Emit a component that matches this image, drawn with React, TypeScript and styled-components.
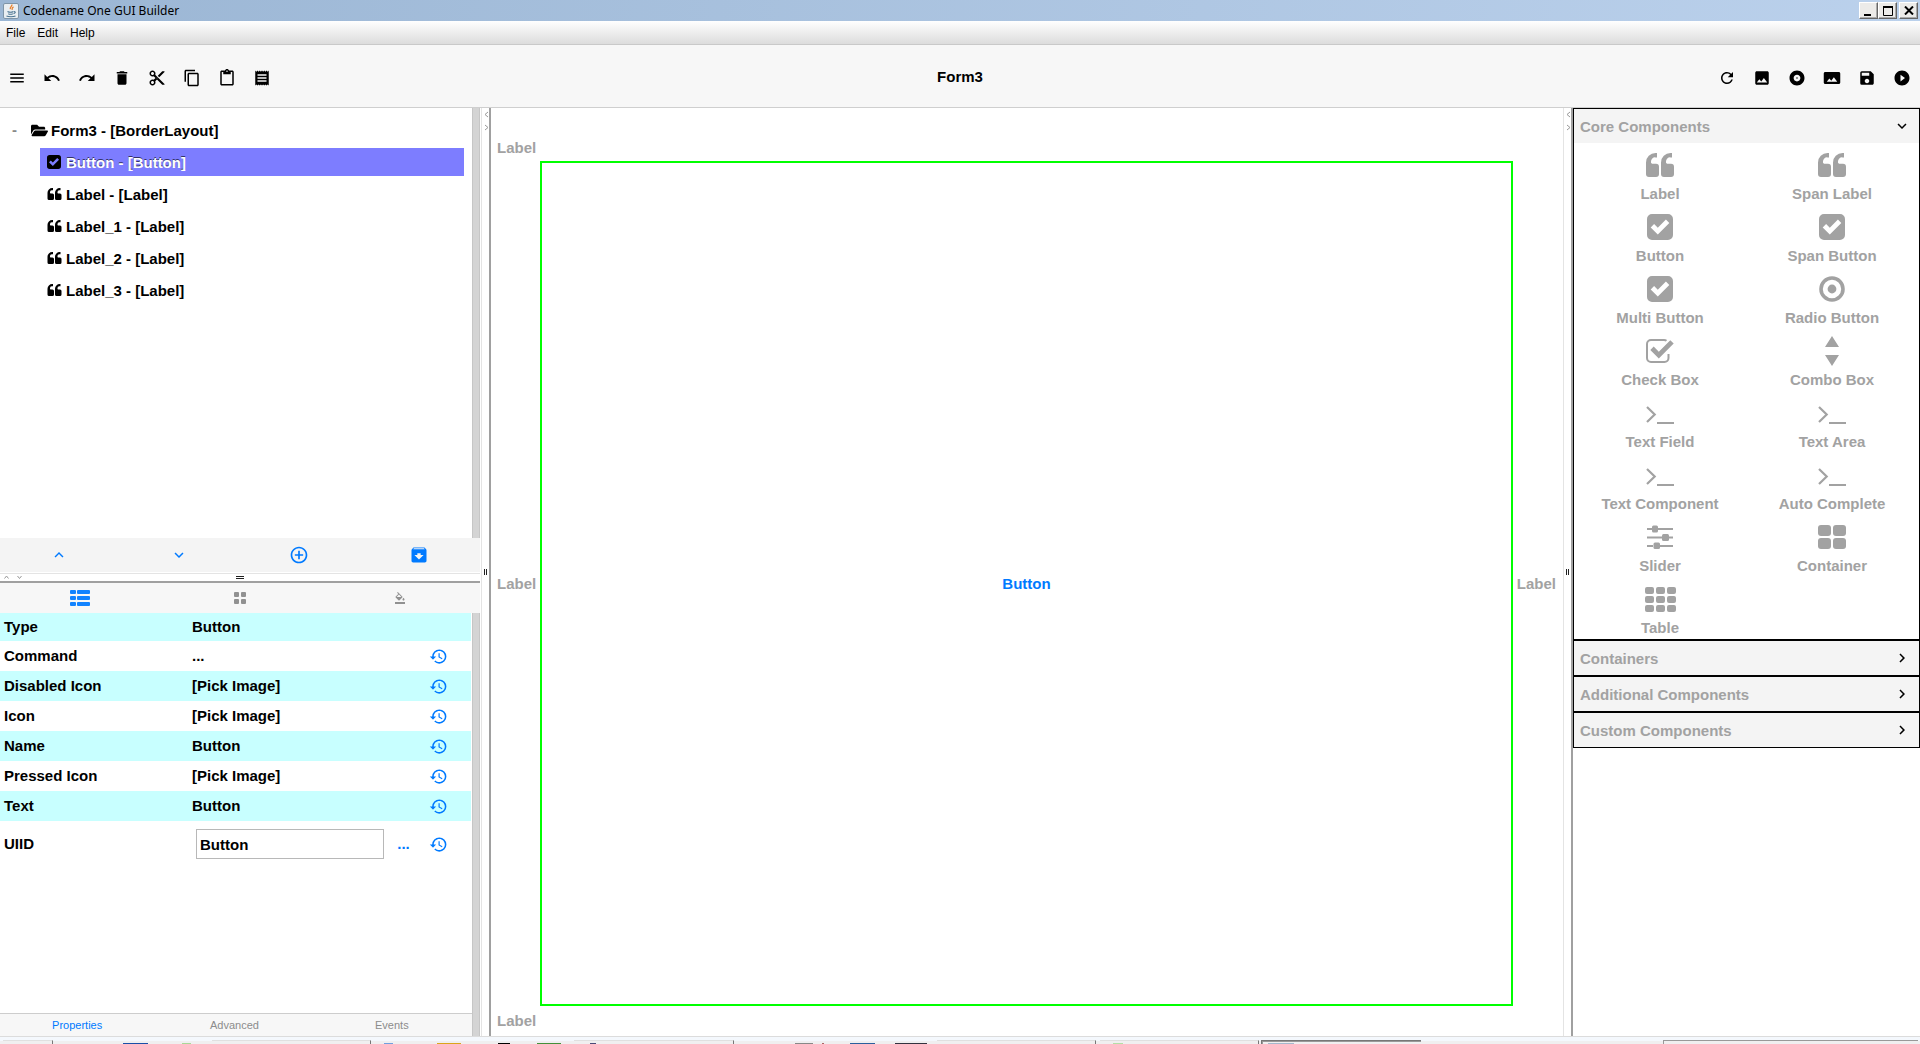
import React, { useState } from 'react';
import styled, { createGlobalStyle, css } from 'styled-components';
import {
  MdMenu, MdUndo, MdRedo, MdDelete, MdContentCut, MdContentCopy, MdContentPaste, MdReceipt,
  MdRefresh, MdImage, MdAlbum, MdPanorama, MdSave, MdPlayCircleFilled, MdExpandLess,
  MdExpandMore, MdChevronRight, MdAddCircleOutline, MdArchive, MdFormatColorFill, MdHistory,
} from 'react-icons/md';
import { FaFolderOpen } from 'react-icons/fa';

const GlobalStyle = createGlobalStyle`
  * { box-sizing: border-box; }
  body { margin: 0; font: bold 15px/20px "Liberation Sans", Arial, sans-serif; color: #000; background: #fff; }
  button, input { font: inherit; color: inherit; }
  button { background: none; border: 0; padding: 0; }
  svg { display: block; flex: none; }
`;

const BLUE = '#007aff';
const GREY = '#a2a2a2';

/* ---------- icons ---------- */

const Glyph = ({ w, h, vb, children }: { w: number; h: number; vb: string; children: React.ReactNode }) => (
  <svg width={w} height={h} viewBox={vb} fill="currentColor" aria-hidden="true">{children}</svg>
);

const Quote = ({ w = 28, h = 24 }: { w?: number; h?: number }) => (
  <Glyph w={w} h={h} vb="0 0 28 24">
    <path d="M9.500 0H11v4.400H9.500A4 4 0 0 0 5 8.500v1.300l1 1H10a3 3 0 0 1 3 3V21a3 3 0 0 1-3 3H3a3 3 0 0 1-3-3V9.500A9.500 9.500 0 0 1 9.500 0Z" />
    <path d="M24.500 0H26v4.400H24.500A4 4 0 0 0 20 8.500v1.300l1 1H25a3 3 0 0 1 3 3V21a3 3 0 0 1-3 3H18a3 3 0 0 1-3-3V9.500A9.500 9.500 0 0 1 24.500 0Z" />
  </Glyph>
);

const CheckSquare = ({ size = 26 }: { size?: number }) => (
  <Glyph w={size} h={size} vb="0 0 26 26">
    <path fillRule="evenodd" d="M5 0H21a5 5 0 0 1 5 5V21a5 5 0 0 1-5 5H5a5 5 0 0 1-5-5V5a5 5 0 0 1 5-5ZM10.800 20.500 22.300 9 18.900 5.600 10.800 13.700 7.100 10 3.700 13.400Z" />
  </Glyph>
);

const Radio = () => (
  <Glyph w={26} h={26} vb="0 0 26 26">
    <circle cx="13" cy="13" r="11" fill="none" stroke="currentColor" strokeWidth="3.6" />
    <circle cx="13" cy="13" r="4.400" />
  </Glyph>
);

const CheckBox = () => (
  <Glyph w={28} h={24} vb="0 0 28 24">
    <path d="M20.500 1.800Q19.500 1 18 1H5A4 4 0 0 0 1 5V19a4 4 0 0 0 4 4H18.500a4 4 0 0 0 4-4V15" fill="none" stroke="currentColor" strokeWidth="2" />
    <path d="M12.800 19.500 4.300 11 7.700 7.600 12.800 12.700 24.300 1.200 27.700 4.600Z" />
  </Glyph>
);

const Combo = () => (
  <Glyph w={14} h={30} vb="0 0 14 30"><path d="M7 0 14 11H0ZM7 30 0 19H14Z" /></Glyph>
);

const Prompt = () => (
  <Glyph w={28} h={24} vb="0 -4 28 24">
    <path d="M1 2 8.700 9.500 1 17" fill="none" stroke="currentColor" strokeWidth="2.200" />
    <path d="M11 17H28v2H11Z" />
  </Glyph>
);

const Sliders = () => (
  <Glyph w={26} h={24} vb="0 0 26 24">
    <path d="M0 3H5V5H0ZM11 3H26V5H11ZM0 11.500H15V13.500H0ZM22 11.500H26V13.500H22ZM0 20H6V22H0ZM13 20H26V22H13Z" />
    <rect x="5" y="0.500" width="6" height="7" rx="1.500" />
    <rect x="15" y="9" width="7" height="7" rx="1.500" />
    <rect x="6.500" y="17.500" width="6.500" height="6.500" rx="1.500" />
  </Glyph>
);

const GridGlyph = ({ cols, rows, cw, ch, gx, gy, r }: { cols: number; rows: number; cw: number; ch: number; gx: number; gy: number; r: number }) => {
  const w = cols * cw + (cols - 1) * gx;
  const h = rows * ch + (rows - 1) * gy;
  return (
    <Glyph w={w} h={h} vb={`0 0 ${w} ${h}`}>
      {Array.from({ length: cols * rows }, (_, i) => (
        <rect key={i} x={(i % cols) * (cw + gx)} y={Math.floor(i / cols) * (ch + gy)} width={cw} height={ch} rx={r} />
      ))}
    </Glyph>
  );
};

const ListGlyph = () => (
  <Glyph w={20} h={16} vb="0 0 20 16">
    {[0, 6, 12].map((y) => (
      <React.Fragment key={y}>
        <rect x="0" y={y} width="6" height="4" rx="1" />
        <rect x="7" y={y} width="13" height="4" rx="1" />
      </React.Fragment>
    ))}
  </Glyph>
);

const JavaLogo = () => (
  <svg width="16" height="16" viewBox="0 0 16 16" aria-hidden="true">
    <rect x=".5" y=".5" width="15" height="15" rx="1.500" fill="#e9eef2" stroke="#7f95a8" />
    <path d="M8.800 1.500c1 1.700-2.800 2.700-1.300 4.700M10.500 3.800c-2 1-1.200 1.800-1.400 3" fill="none" stroke="#e8802c" strokeWidth="1.300" />
    <path d="M4.500 8.500c1.500.8 4.500.8 6 0M11 8.700c2-.3 1.500 1.700-.5 2M5.300 10.700c1 .6 3.300.6 4.500 0M3.500 13c2 1 7 1 9 0" fill="none" stroke="#4c7592" strokeWidth="1.100" />
  </svg>
);

/* ---------- window chrome ---------- */

const Window = styled.div`
  display: flex; flex-direction: column; height: 100vh; overflow: hidden;
`;
const TitleBar = styled.header`
  display: flex; align-items: center; gap: 4px; height: 21px; flex: none; padding: 0 2px 0 3px;
  background: linear-gradient(90deg, #9bb6d4, #bbd1ec);
  font: 12px/20px "Noto Sans", "Open Sans", sans-serif;
`;
const WindowTitle = styled.span`flex: 1;`;
const WindowButtons = styled.div`display: flex; `;
const WindowButton = styled.button<{ $apart?: boolean }>`
  display: grid; place-items: center; width: 19px; height: 17px; margin-left: ${(p) => (p.$apart ? 2 : 0)}px;
  background: #ecebe9; border: 1px solid; border-color: #fff #666 #666 #fff;
  box-shadow: inset -1px -1px #aaa;
`;
const MenuBar = styled.nav`
  display: flex; align-items: center; gap: 12px; height: 24px; flex: none; padding: 1px 6px 0;
  font-size: 12px; font-weight: normal; color: #000;
  background: linear-gradient(#fff, #dcdcdc); border-bottom: 1px solid #c9c9c9;
`;
const ToolBar = styled.div`
  display: grid; grid-template-columns: 1fr auto 1fr; align-items: center; height: 63px; flex: none;
  padding-top: 4px; background: #f7f7f7; border-bottom: 1px solid #cfcfcf;
`;
const ToolGroup = styled.div<{ $end?: boolean }>`
  display: flex; justify-content: ${(p) => (p.$end ? 'flex-end' : 'flex-start')};
`;
const ToolButton = styled.button`
  display: grid; place-items: center; width: 35px; height: 36px; padding-right: 1px;
`;
const FormTitle = styled.h1`margin: 0; font-size: 15px; padding-bottom: 2px;`;

/* ---------- panes ---------- */

const Main = styled.main`display: flex; flex: 1; min-height: 0;`;
const LeftPane = styled.aside`display: flex; flex-direction: column; flex: 0 0 25%; min-width: 0;`;
const UpperPane = styled.section`display: flex; flex-direction: column; flex: 0 0 50%;`;
const LowerPane = styled.section`display: flex; flex-direction: column; flex: 1; min-height: 0;`;
const Scrolled = styled.div`display: flex; flex: 1; min-height: 0;`;
const ScrollBody = styled.div`display: flex; flex-direction: column; flex: 1; min-width: 0;`;
const ScrollTrack = styled.div`
  width: 8px; flex: none; background: #d4d4d4; border: solid #c6c6c6; border-width: 0 1px;
`;
const Splitter = styled.div<{ $row?: boolean }>`
  position: relative; flex: none; display: flex; align-items: center; justify-content: center;
  ${(p) => p.$row
    ? css`height: 11px; border-top: 1px solid #fff; border-bottom: 2px solid #a0a0a0; box-shadow: inset 0 1px #e4e4e4;`
    : css`width: 11px; border-left: 1px solid #fff; border-right: 2px solid #a0a0a0; box-shadow: inset 1px 0 #e4e4e4;`}
`;
const Grip = styled.span<{ $row?: boolean }>`
  ${(p) => p.$row
    ? css`width: 8px; height: 3px; border: solid #222; border-width: 1px 0;`
    : css`width: 3px; height: 6px; border: solid #222; border-width: 0 1px;`}
`;
const Arrows = styled.svg<{ $row?: boolean }>`
  position: absolute; ${(p) => (p.$row ? 'left: 4px; top: 1px;' : 'left: 3px; top: 3px;')}
  fill: none; stroke: #999;
`;

const SplitBar = ({ row }: { row?: boolean }) => (
  <Splitter $row={row} role="separator">
    {row ? (
      <Arrows $row width="19" height="6" viewBox="0 0 19 6"><path d="M.5 4.500 2.500 2 4.500 4.500M13.500 2 15.500 4.500 17.500 2" /></Arrows>
    ) : (
      <Arrows width="5" height="20" viewBox="0 0 5 20"><path d="M4 1 1 3.500 4 6M1 14 4 16.500 1 19" /></Arrows>
    )}
    <Grip $row={row} />
  </Splitter>
);

/* ---------- component tree ---------- */

const Tree = styled.div`
  display: flex; flex-direction: column; gap: 4px; flex: 1; padding: 8px 8px 0 0;
`;
const TreeRoot = styled.button`
  display: flex; align-items: center; gap: 3px; height: 28px; padding: 0 0 0 12px;
`;
const Toggle = styled.span`width: 16px; text-align: left; color: #888;`;
const TreeNode = styled.button<{ $selected: boolean }>`
  display: flex; align-items: center; gap: 4px; height: 28px; margin-left: 40px; padding: 0 7px;
  ${(p) => p.$selected && css`background: #7d7dff;`}
`;
const NodeIcon = styled.span`display: grid; justify-items: start; width: 15px;`;
const NodeText = styled.span<{ $selected: boolean }>`
  padding-top: 1px;
  ${(p) => p.$selected && css`color: #fff; text-shadow: 0 -1px #333366;`}
`;
const ActionBar = styled.div`
  display: grid; grid-template-columns: repeat(4, 1fr); height: 34px; flex: none; background: #f4f4f4; color: ${BLUE};
`;
const ActionButton = styled.button`display: grid; place-items: center; padding-right: 2px;`;

/* ---------- properties ---------- */

const ViewTabs = styled.div`
  display: grid; grid-template-columns: repeat(3, 1fr); height: 30px; flex: none; background: #f7f7f7;
`;
const ViewTab = styled.button<{ $active?: boolean }>`
  display: grid; place-items: center; color: ${(p) => (p.$active ? '#1283ff' : '#919191')};
`;
const PropTable = styled.table`
  width: 100%; border-collapse: collapse; table-layout: fixed; border-right: 1px solid #fff;
`;
const PropRow = styled.tr<{ $tint: boolean; $height: number }>`
  height: ${(p) => p.$height}px; background: ${(p) => (p.$tint ? '#c8ffff' : '#fff')};
`;
const PropName = styled.th`width: 192px; padding: 0 4px; text-align: left;`;
const PropValue = styled.td`padding: 0;`;
const UiidField = styled.td`padding: 0 0 0 4px;`;
const UiidLine = styled.div`display: flex; align-items: center;`;
const UiidInput = styled.input`
  flex: 1; min-width: 0; height: 30px; padding: 0 3px; border: 1px solid #b8b8b8; background: #fff; outline: 0;
`;
const MoreButton = styled.button`width: 40px; color: ${BLUE};`;
const PropReset = styled.td`width: 48px; padding: 0; color: ${BLUE};`;
const ResetButton = styled.button`display: block; margin-left: 5px;`;
const PageTabs = styled.div`
  display: grid; grid-template-columns: repeat(3, 1fr); height: 23px; flex: none; margin-top: auto;
  background: #f7f7f7; border-top: 1px solid #cdcdcd;
`;
const PageTab = styled.button<{ $active: boolean }>`
  padding-right: 3px; font-size: 11px; font-weight: normal; color: ${(p) => (p.$active ? BLUE : '#8c8c8c')};
`;

/* ---------- canvas ---------- */

const Canvas = styled.section`
  display: grid; flex: 1; min-width: 0; color: ${GREY};
  grid-template: 53px 1fr 30px / 49px 1fr 49px;
`;
const NorthLabel = styled.div`grid-column: 1 / -1; padding: 30px 6px 0;`;
const SideLabel = styled.div<{ $end?: boolean }>`
  display: flex; align-items: center; justify-content: ${(p) => (p.$end ? 'flex-end' : 'flex-start')}; padding: 0 6px;
`;
const CenterButton = styled.button`border: 2px solid #0f0; color: ${BLUE};`;
const SouthLabel = styled.div`grid-column: 1 / -1; padding: 5px 6px;`;

/* ---------- palette ---------- */

const Palette = styled.aside`flex: 0 0 347px; color: ${GREY};`;
const Section = styled.section`border: 1px solid #000;`;
const SectionHead = styled.button`
  display: flex; align-items: center; justify-content: space-between; width: 100%; height: 34px;
  padding: 2px 8px 0 6px; background: #f4f4f4;
`;
const Chevron = styled.span`color: #000; padding-bottom: 3px;`;
const Items = styled.div`display: grid; grid-template-columns: 1fr 1fr; padding-right: 1px;`;
const Item = styled.button`
  display: flex; flex-direction: column; align-items: center; gap: 3px; height: 62px; padding-top: 6px;
`;
const ItemIcon = styled.span`display: grid; place-items: center; height: 32px;`;

/* ---------- task bar ---------- */

const TaskBar = styled.footer`
  display: flex; align-items: flex-end; height: 8px; flex: none; overflow: hidden; padding-left: 3px;
  background: linear-gradient(#f4f8fd 4px, #f0eff0 4px); border-top: 1px solid #dcdcdc;
`;
const Task = styled.div<{ $w: number; $down?: boolean }>`
  display: flex; align-items: flex-end; width: ${(p) => p.$w}px; height: 4px; flex: none; border: solid #777; background: #f0eff0;
  ${(p) => p.$down ? css`border-width: 1px 0 0 1px; box-shadow: inset 1px 1px #999;` : css`border-color: #e0e0e0 #777; border-width: 1px 1px 0 0;`}
`;
const Launchers = styled.div<{ $w: number }>`
  display: flex; align-items: flex-end; width: ${(p) => p.$w}px; flex: none;
`;
const Launcher = styled.span<{ $gap: number; $w: number; $c: string }>`
  flex: none; margin-left: ${(p) => p.$gap}px; width: ${(p) => p.$w}px; height: 1px; background: ${(p) => p.$c};
`;
const Tray = styled.div`
  width: 255px; height: 4px; margin: 0 2px 0 auto; border: solid #999; border-width: 1px 0 0 1px; background: #f0eff0;
`;

const leftTools = [
  ['Menu', MdMenu], ['Undo', MdUndo], ['Redo', MdRedo], ['Delete', MdDelete], ['Cut', MdContentCut],
  ['Copy', MdContentCopy], ['Paste', MdContentPaste], ['Receipt', MdReceipt],
] as const;
const rightTools = [
  ['Refresh', MdRefresh], ['Image', MdImage], ['Theme', MdAlbum], ['Background', MdPanorama],
  ['Save', MdSave], ['Preview', MdPlayCircleFilled],
] as const;
const nodes = ['Button - [Button]', 'Label - [Label]', 'Label_1 - [Label]', 'Label_2 - [Label]', 'Label_3 - [Label]'];
const properties = [
  ['Type', 'Button'], ['Command', '...'], ['Disabled Icon', '[Pick Image]'], ['Icon', '[Pick Image]'],
  ['Name', 'Button'], ['Pressed Icon', '[Pick Image]'], ['Text', 'Button'],
];
const components: [string, React.ReactNode][] = [
  ['Label', <Quote />], ['Span Label', <Quote />],
  ['Button', <CheckSquare />], ['Span Button', <CheckSquare />],
  ['Multi Button', <CheckSquare />], ['Radio Button', <Radio />],
  ['Check Box', <CheckBox />], ['Combo Box', <Combo />],
  ['Text Field', <Prompt />], ['Text Area', <Prompt />],
  ['Text Component', <Prompt />], ['Auto Complete', <Prompt />],
  ['Slider', <Sliders />], ['Container', <GridGlyph cols={2} rows={2} cw={13} ch={11} gx={2} gy={2} r={3} />],
  ['Table', <GridGlyph cols={3} rows={3} cw={9} ch={7} gx={2} gy={2} r={2} />],
];
const pages = ['Properties', 'Advanced', 'Events'];

export default function App() {
  const [selected, setSelected] = useState(0);
  const [page, setPage] = useState('Properties');
  const [uiid, setUiid] = useState('Button');
  const [open, setOpen] = useState(true);

  return (
    <Window>
      <GlobalStyle />
      <TitleBar>
        <JavaLogo />
        <WindowTitle>Codename One GUI Builder</WindowTitle>
        <WindowButtons>
          <WindowButton aria-label="Minimize"><svg width="11" height="11"><path d="M1 9H8V11H1Z" /></svg></WindowButton>
          <WindowButton aria-label="Maximize"><svg width="10" height="10"><path d="M.5 1H9.500V9.500H.5Z" fill="none" stroke="#000" /><path d="M0 0H10V2H0Z" /></svg></WindowButton>
          <WindowButton $apart aria-label="Close"><svg width="10" height="9"><path d="M1 .5 9 8.500M9 .5 1 8.500" stroke="#000" strokeWidth="2" /></svg></WindowButton>
        </WindowButtons>
      </TitleBar>
      <MenuBar>
        <button>File</button>
        <button>Edit</button>
        <button>Help</button>
      </MenuBar>
      <ToolBar>
        <ToolGroup>
          {leftTools.map(([name, Icon]) => <ToolButton key={name} aria-label={name}><Icon size={18} /></ToolButton>)}
        </ToolGroup>
        <FormTitle>Form3</FormTitle>
        <ToolGroup $end>
          {rightTools.map(([name, Icon]) => <ToolButton key={name} aria-label={name}><Icon size={18} /></ToolButton>)}
        </ToolGroup>
      </ToolBar>
      <Main>
        <LeftPane>
          <UpperPane>
            <Scrolled>
              <Tree>
                <TreeRoot><Toggle>-</Toggle><FaFolderOpen size={17} /><NodeText $selected={false}>Form3 - [BorderLayout]</NodeText></TreeRoot>
                {nodes.map((label, i) => (
                  <TreeNode key={label} $selected={i === selected} onClick={() => setSelected(i)}>
                    <NodeIcon>{i === 0 ? <CheckSquare size={14} /> : <Quote w={15} h={12} />}</NodeIcon>
                    <NodeText $selected={i === selected}>{label}</NodeText>
                  </TreeNode>
                ))}
              </Tree>
              <ScrollTrack />
            </Scrolled>
            <ActionBar>
              <ActionButton aria-label="Move up"><MdExpandLess size={18} /></ActionButton>
              <ActionButton aria-label="Move down"><MdExpandMore size={18} /></ActionButton>
              <ActionButton aria-label="Add"><MdAddCircleOutline size={20} /></ActionButton>
              <ActionButton aria-label="Archive"><MdArchive size={20} /></ActionButton>
            </ActionBar>
          </UpperPane>
          <SplitBar row />
          <LowerPane>
            <ViewTabs>
              <ViewTab $active aria-label="List"><ListGlyph /></ViewTab>
              <ViewTab aria-label="Grid"><GridGlyph cols={2} rows={2} cw={5} ch={5} gx={2} gy={2} r={1} /></ViewTab>
              <ViewTab aria-label="Style"><MdFormatColorFill size={12} /></ViewTab>
            </ViewTabs>
            <Scrolled>
              <ScrollBody>
                <PropTable>
                  <colgroup><col width="192" /><col /><col width="48" /></colgroup>
                  <tbody>
                    {properties.map(([name, value], i) => (
                      <PropRow key={name} $tint={i % 2 === 0} $height={i === 0 ? 28 : 30}>
                        <PropName scope="row">{name}</PropName>
                        <PropValue><button>{value}</button></PropValue>
                        <PropReset>{i > 0 && <ResetButton aria-label={`Reset ${name}`}><MdHistory size={19} /></ResetButton>}</PropReset>
                      </PropRow>
                    ))}
                    <PropRow $tint={false} $height={46}>
                      <PropName scope="row"><label htmlFor="uiid">UIID</label></PropName>
                      <UiidField>
                        <UiidLine>
                          <UiidInput id="uiid" value={uiid} onChange={(e) => setUiid(e.target.value)} />
                          <MoreButton>...</MoreButton>
                        </UiidLine>
                      </UiidField>
                      <PropReset><ResetButton aria-label="Reset UIID"><MdHistory size={19} /></ResetButton></PropReset>
                    </PropRow>
                  </tbody>
                </PropTable>
                <PageTabs>
                  {pages.map((p) => <PageTab key={p} $active={p === page} onClick={() => setPage(p)}>{p}</PageTab>)}
                </PageTabs>
              </ScrollBody>
              <ScrollTrack />
            </Scrolled>
          </LowerPane>
        </LeftPane>
        <SplitBar />
        <Canvas>
          <NorthLabel>Label</NorthLabel>
          <SideLabel>Label</SideLabel>
          <CenterButton>Button</CenterButton>
          <SideLabel $end>Label</SideLabel>
          <SouthLabel>Label</SouthLabel>
        </Canvas>
        <SplitBar />
        <Palette>
          <Section>
            <SectionHead onClick={() => setOpen(!open)}>Core Components<Chevron>{open ? <MdExpandMore size={18} /> : <MdChevronRight size={18} />}</Chevron></SectionHead>
            {open && (
              <Items>
                {components.map(([name, icon]) => <Item key={name}><ItemIcon>{icon}</ItemIcon>{name}</Item>)}
              </Items>
            )}
          </Section>
          {['Containers', 'Additional Components', 'Custom Components'].map((name) => (
            <Section key={name}>
              <SectionHead>{name}<Chevron><MdChevronRight size={18} /></Chevron></SectionHead>
            </Section>
          ))}
        </Palette>
      </Main>
      <TaskBar>
        <Task $w={50} />
        <Launchers $w={159}><Launcher $gap={70} $w={25} $c="#1a4fa8" /><Launcher $gap={34} $w={9} $c="#a8d898" /></Launchers>
        <Task $w={159} />
        <Launchers $w={203}>
          <Launcher $gap={13} $w={9} $c="#6f9fe0" /><Launcher $gap={44} $w={24} $c="#dba51c" />
          <Launcher $gap={37} $w={12} $c="#000" /><Launcher $gap={27} $w={24} $c="#43903a" />
        </Launchers>
        <Task $w={160}><Launcher $gap={16} $w={6} $c="#4a4a78" /></Task>
        <Launchers $w={203}>
          <Launcher $gap={61} $w={18} $c="#888" /><Launcher $gap={9} $w={2} $c="#a66" />
          <Launcher $gap={26} $w={25} $c="#2a5f9e" /><Launcher $gap={20} $w={32} $c="#333340" />
        </Launchers>
        <Task $w={159} />
        <Launchers $w={4} />
        <Task $w={159}><Launcher $gap={13} $w={10} $c="#b4dfa6" /></Task>
        <Launchers $w={2} />
        <Task $w={160} $down><Launcher $gap={6} $w={26} $c="#a4b8cc" /></Task>
        <Tray />
      </TaskBar>
    </Window>
  );
}
